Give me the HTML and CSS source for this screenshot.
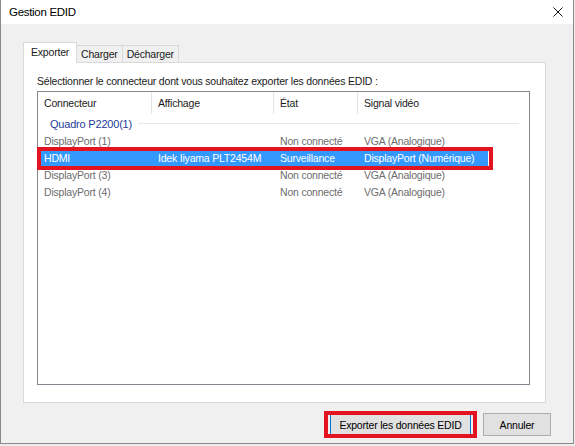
FILE: index.html
```html
<!DOCTYPE html>
<html lang="fr">
<head>
    <meta charset="UTF-8">
    <title>Gestion EDID</title>
    <link rel="stylesheet" href="styles.css">
</head>
<body>
    <div class="window">
        <!-- Title bar -->
        <div class="titlebar">
            <span class="title">Gestion EDID</span>
            <svg class="close" width="10" height="10" viewBox="0 0 10 10">
                <path d="M0.5 0.5 L9.5 9.5 M9.5 0.5 L0.5 9.5" stroke="#111" stroke-width="1" fill="none"/>
            </svg>
        </div>

        <div class="content">
            <!-- Tabs -->
            <div class="tabs">
                <div class="tab active">Exporter</div>
                <div class="tab">Charger</div>
                <div class="tab">Décharger</div>
            </div>

            <div class="panel">
                <p class="hint">Sélectionner le connecteur dont vous souhaitez exporter les données EDID :</p>

                <div class="listview">
                    <div class="lv-header">
                        <div class="hcell">Connecteur</div>
                        <div class="hcell">Affichage</div>
                        <div class="hcell">État</div>
                        <div class="hcell">Signal vidéo</div>
                    </div>

                    <div class="group">
                        <span class="group-name">Quadro P2200(1)</span>
                        <span class="group-line"></span>
                    </div>

                    <div class="lv-row">
                        <div class="cell">DisplayPort (1)</div>
                        <div class="cell"></div>
                        <div class="cell">Non connecté</div>
                        <div class="cell">VGA (Analogique)</div>
                    </div>
                    <div class="lv-row selected">
                        <div class="cell">HDMI</div>
                        <div class="cell">Idek Iiyama PLT2454M</div>
                        <div class="cell">Surveillance</div>
                        <div class="cell">DisplayPort (Numérique)</div>
                    </div>
                    <div class="lv-row">
                        <div class="cell">DisplayPort (3)</div>
                        <div class="cell"></div>
                        <div class="cell">Non connecté</div>
                        <div class="cell">VGA (Analogique)</div>
                    </div>
                    <div class="lv-row">
                        <div class="cell">DisplayPort (4)</div>
                        <div class="cell"></div>
                        <div class="cell">Non connecté</div>
                        <div class="cell">VGA (Analogique)</div>
                    </div>
                </div>
            </div>

            <!-- Buttons -->
            <div class="buttons">
                <div class="mark">
                    <button class="btn default">Exporter les données EDID</button>
                </div>
                <button class="btn cancel">Annuler</button>
            </div>
        </div>
    </div>
</body>
</html>
```

FILE: styles.css
```css
* {
    margin: 0;
    padding: 0;
    box-sizing: border-box;
}

body {
    background: #ececec;
    font-family: "Liberation Sans", Arial, sans-serif;
    font-size: 10.5px;
    letter-spacing: -0.2px;
    color: #1a1a1a;
}

.window {
    width: 574px;
    height: 444px;
    background: #f0f0f0;
    border-left: 1px solid #8a8a8a;
    border-right: 1px solid #8a8a8a;
    border-bottom: 1px solid #8a8a8a;
}

/* Title bar */
.titlebar {
    height: 24px;
    background: #fff;
    display: flex;
    align-items: center;
    justify-content: space-between;
    padding: 0 8px 0 8px;
}

.title {
    font-size: 11.5px;
    letter-spacing: -0.3px;
    color: #000;
}

.close {
    margin-right: 2px;
}

.content {
    padding: 18px 21px 0 22px;
}

/* Tabs */
.tabs {
    display: flex;
    align-items: flex-end;
    height: 20px;
    position: relative;
    z-index: 1;
}

.tab {
    height: 17px;
    line-height: 16px;
    padding: 0 4px;
    border: 1px solid #d9d9d9;
    border-bottom: none;
    background: #f0f0f0;
    margin-left: -1px;
}

.tab.active {
    height: 21px;
    line-height: 19px;
    margin-bottom: -1px;
    margin-left: 0;
    background: #fff;
    padding: 0 7px;
}

.panel {
    width: 523px;
    height: 341px;
    background: #fff;
    border: 1px solid #d9d9d9;
    display: flex;
    flex-direction: column;
    padding: 11px 15px 17px 13px;
}

.hint {
    line-height: 15px;
    margin-bottom: 2px;
}

/* List view */
.listview {
    flex: 1;
    border: 1px solid #828790;
    background: #fff;
}

.lv-header,
.lv-row {
    display: grid;
    grid-template-columns: 114px 122px 84px 130px;
}

.lv-header {
    height: 22px;
    grid-template-columns: 114px 122px 84px 130px 1fr;
}

.hcell {
    border-right: 1px solid #e5e5e5;
    line-height: 22px;
    padding-left: 6px;
}

.lv-header .hcell:nth-child(4) {
    border-right: none;
}

.group {
    display: flex;
    align-items: center;
    height: 19px;
    padding-left: 12px;
    margin-right: 10px;
}

.group-name {
    color: #1e3c96;
    font-size: 11px;
}

.group-line {
    flex: 1;
    height: 1px;
    background: #e2e7f0;
    margin-left: 6px;
}

.lv-row {
    height: 17px;
    line-height: 17px;
    width: 450px;
    color: #6d6d6d;
}

.cell {
    padding-left: 6px;
    white-space: nowrap;
}

.lv-row.selected {
    background: #3399ff;
    color: #fff;
    position: relative;
}

/* red annotation frame */
.lv-row.selected::after {
    content: "";
    position: absolute;
    top: -3px;
    bottom: -3px;
    left: -1px;
    right: -5px;
    border: 4px solid #e3141f;
}

/* Buttons */
.buttons {
    display: flex;
    justify-content: flex-end;
    align-items: center;
    gap: 6px;
    margin-top: 10px;
    padding-right: 1px;
}

.mark {
    position: relative;
    padding: 0 6px;
}

.mark::after {
    content: "";
    position: absolute;
    top: -2px;
    bottom: -2px;
    left: 0;
    right: 0;
    border: 4px solid #e3141f;
}

.btn {
    height: 23px;
    background: #e1e1e1;
    border: 1px solid #adadad;
    font-family: inherit;
    font-size: 10.5px;
    letter-spacing: -0.2px;
    color: #000;
}

.btn.default {
    width: 141px;
    border-color: #0078d7;
}

.btn.cancel {
    width: 68px;
}
```
